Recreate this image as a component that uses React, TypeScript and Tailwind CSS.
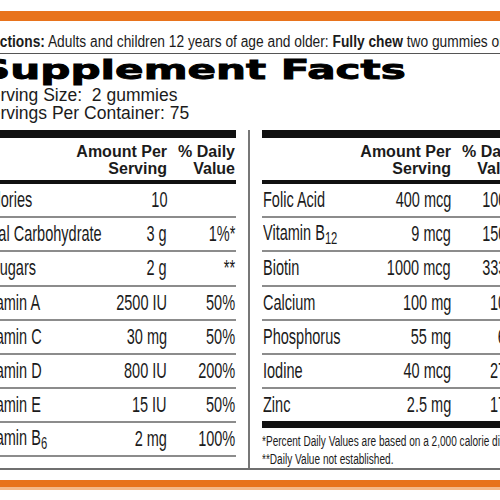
import React from "react";

type Row = {
  label: React.ReactNode;
  amount: string;
  dv: string;
  indent?: boolean;
};

const leftRows: Row[] = [
  { label: "Calories", amount: "10", dv: "" },
  { label: "Total Carbohydrate", amount: "3 g", dv: "1%*" },
  { label: "Sugars", amount: "2 g", dv: "**", indent: true },
  { label: "Vitamin A", amount: "2500 IU", dv: "50%" },
  { label: "Vitamin C", amount: "30 mg", dv: "50%" },
  { label: "Vitamin D", amount: "800 IU", dv: "200%" },
  { label: "Vitamin E", amount: "15 IU", dv: "50%" },
  {
    label: (
      <>
        Vitamin B<span className="align-[-4px] text-[17px]">6</span>
      </>
    ),
    amount: "2 mg",
    dv: "100%",
  },
];

const rightRows: Row[] = [
  { label: "Folic Acid", amount: "400 mcg", dv: "100%" },
  {
    label: (
      <>
        Vitamin B<span className="align-[-4px] text-[17px]">12</span>
      </>
    ),
    amount: "9 mcg",
    dv: "150%",
  },
  { label: "Biotin", amount: "1000 mcg", dv: "333%" },
  { label: "Calcium", amount: "100 mg", dv: "10%" },
  { label: "Phosphorus", amount: "55 mg", dv: "6%" },
  { label: "Iodine", amount: "40 mcg", dv: "27%" },
  { label: "Zinc", amount: "2.5 mg", dv: "17%" },
];

// condensed text: the label face is much narrower than Arial
const Narrow = ({ children, right }: { children: React.ReactNode; right?: boolean }) => (
  <span
    className={
      right
        ? "inline-block origin-right scale-x-[0.66] whitespace-nowrap"
        : "inline-block origin-left scale-x-[0.66] whitespace-nowrap"
    }
  >
    {children}
  </span>
);

const FactRow = ({ row, last }: { row: Row; last: boolean }) => (
  <div
    className={
      last
        ? "flex h-[32.2px] items-center text-[22px] leading-none"
        : "flex h-[34.2px] items-center border-b-2 border-[#8c8c8c] text-[22px] leading-none"
    }
  >
    <div className={row.indent ? "min-w-0 flex-1 pl-[12px]" : "min-w-0 flex-1 pl-[1px]"}>
      <Narrow>{row.label}</Narrow>
    </div>
    <div className="w-[100px] text-right">
      <Narrow right>{row.amount}</Narrow>
    </div>
    <div className="w-[69px] pr-[1px] text-right">
      <Narrow right>{row.dv}</Narrow>
    </div>
  </div>
);

const FactTable = ({ rows, footer }: { rows: Row[]; footer?: boolean }) => (
  <div className="w-[258px] shrink-0">
    <div className="h-[8px] bg-[#111]" />
    <div className="flex h-[42px] pt-[5px] text-[16px] font-bold leading-[17.5px]">
      <div className="flex-1" />
      <div className="w-[100px] text-right">
        Amount Per
        <br />
        Serving
      </div>
      <div className="w-[69px] pr-[1px] text-right">
        % Daily
        <br />
        Value
      </div>
    </div>
    <div className="h-[4px] bg-[#111]" />
    {rows.map((r, i) => (
      <FactRow key={i} row={r} last={footer ? i === rows.length - 1 : false} />
    ))}
    {footer && (
      <>
        <div className="h-[7px] bg-[#111]" />
        <div className="pt-[5px] text-[14px] leading-[17.5px]">
          <div className="whitespace-nowrap">
            <span className="inline-block origin-left scale-x-[0.72]">
              *Percent Daily Values are based on a 2,000 calorie diet.
            </span>
          </div>
          <div className="whitespace-nowrap">
            <span className="inline-block origin-left scale-x-[0.72]">
              **Daily Value not established.
            </span>
          </div>
        </div>
      </>
    )}
  </div>
);

export default function App() {
  return (
    <div className="h-[500px] w-[500px] overflow-hidden bg-white font-['Liberation_Sans',Arial,sans-serif] text-[#1b1b1b]">
      <div className="mt-[11px] h-[10px] bg-[#e8731c]" />

      <div className="h-[32.5px] border-b-[1.5px] border-[#555] pt-[12px]">
        <p className="-ml-[27px] whitespace-nowrap text-[16px] leading-[18px]">
          <span className="inline-block origin-left scale-x-[0.86]">
            <b>Directions:</b> Adults and children 12 years of age and older: <b>Fully chew</b> two
            gummies once daily.
          </span>
        </p>
      </div>

      <div className="-ml-[22px] w-[560px]">
        <h1 className="mt-[2.3px] ml-[2px] whitespace-nowrap font-['DejaVu_Sans',sans-serif] text-[27px] font-bold leading-[28px] text-black [-webkit-text-stroke:0.9px_black]">
          <span className="inline-block origin-left scale-x-[1.56]">Supplement Facts</span>
        </h1>

        <div className="mt-[2.5px] ml-[1px] whitespace-pre text-[17.5px] leading-[18px]">
          <div>Serving Size:  2 gummies</div>
          <div>Servings Per Container: 75</div>
        </div>

        <div className="mt-[7.7px] flex items-stretch">
          <div className="self-start">
            <FactTable rows={leftRows} />
          </div>
          <div className="flex w-[26px] shrink-0 justify-center">
            <div className="w-[1.5px] bg-[#777]" />
          </div>
          <FactTable rows={rightRows} footer />
        </div>
      </div>

      <div className="h-[2px] bg-[#6f6f6f]" />
      <div className="mt-[10px] h-[7px] bg-[#e8731c]" />
      <div className="h-[3px] bg-[#f4b98a]" />
    </div>
  );
}
